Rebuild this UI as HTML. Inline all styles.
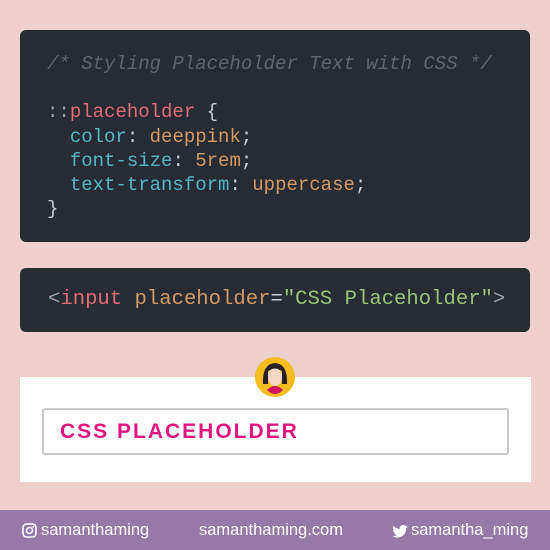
<!DOCTYPE html>
<html><head><style>
body{margin:0;width:550px;height:550px;background:#eed1cd;position:relative;overflow:hidden;font-family:"Liberation Sans",sans-serif}
.box{position:absolute;background:#272b34;border-radius:6px}
pre{margin:0;font-family:"Liberation Mono",monospace;position:absolute;color:#c8ccd4}
.c{color:#5f6672;font-style:italic}.r{color:#e06c75}.t{color:#56b6c2}.o{color:#d19a66}.g{color:#98c379}.gr{color:#9da2ab}
</style></head><body>
<div class="box" style="left:20px;top:30px;width:510px;height:212px"></div>
<pre style="left:47px;top:52px;font-size:19px;line-height:24.2px"><span class="c">/* Styling Placeholder Text with CSS */</span>

<span class="gr">::</span><span class="r">placeholder</span> {
  <span class="t">color</span>: <span class="o">deeppink</span>;
  <span class="t">font-size</span>: <span class="o">5rem</span>;
  <span class="t">text-transform</span>: <span class="o">uppercase</span>;
}</pre>
<div class="box" style="left:20px;top:268px;width:510px;height:64px"></div>
<pre style="left:48px;top:288px;font-size:20.6px;line-height:24px"><span class="gr">&lt;</span><span class="r">input</span> <span class="o">placeholder</span>=<span class="g">"CSS Placeholder"</span><span class="gr">&gt;</span></pre>
<div style="position:absolute;left:20px;top:377px;width:511px;height:105px;background:#fff"></div>
<div style="position:absolute;left:42px;top:408px;width:467px;height:47px;border:2px solid #c9c9c9;border-radius:3px;box-sizing:border-box;background:#fff"></div>
<div style="position:absolute;left:60px;top:420px;font-size:21px;font-weight:bold;color:#e0157f;letter-spacing:2px">CSS PLACEHOLDER</div>
<svg style="position:absolute;left:254px;top:356px" width="42" height="42" viewBox="0 0 42 42">
<circle cx="21" cy="21" r="20" fill="#f5bd1f"/>
<path d="M9 28 Q8 8 21 7 Q34 8 33 28 L28 28 L28 14 L14 14 L14 28Z" fill="#2a1e22"/>
<ellipse cx="21" cy="21" rx="7" ry="9" fill="#f5d6c6"/>
<path d="M13 34 Q21 26 29 34 Q21 42 13 34Z" fill="#d0155f"/>
<path d="M13 16 Q21 9 29 16 L29 13 Q21 6 13 13Z" fill="#2a1e22"/>
</svg>
<div style="position:absolute;left:0;top:510px;width:550px;height:40px;background:#9579a8;color:#fff;font-size:16.5px">
<svg style="position:absolute;left:22px;top:13px" width="15" height="15" viewBox="0 0 15 15"><rect x="1" y="1" width="13" height="13" rx="3.5" fill="none" stroke="#fff" stroke-width="1.6"/><circle cx="7.5" cy="7.5" r="3" fill="none" stroke="#fff" stroke-width="1.6"/><circle cx="11.3" cy="3.8" r=".9" fill="#fff"/></svg>
<span style="position:absolute;left:41px;top:11px">samanthaming</span>
<span style="position:absolute;left:199px;top:11px">samanthaming.com</span>
<svg style="position:absolute;left:392px;top:15px" width="16" height="13" viewBox="0 0 24 20"><path d="M24 2.4a10 10 0 0 1-2.8.8A5 5 0 0 0 23.3.4a10 10 0 0 1-3.1 1.2A4.9 4.9 0 0 0 11.8 6 14 14 0 0 1 1.7.9a4.9 4.9 0 0 0 1.5 6.6A5 5 0 0 1 1 6.9a4.9 4.9 0 0 0 3.9 4.8 5 5 0 0 1-2.2.1 4.9 4.9 0 0 0 4.6 3.4A9.9 9.9 0 0 1 0 17.2 14 14 0 0 0 7.5 19.4c9.1 0 14-7.5 14-14v-.6A10 10 0 0 0 24 2.4z" fill="#fff"/></svg>
<span style="position:absolute;left:411px;top:11px">samantha_ming</span>
</div>
</body></html>
